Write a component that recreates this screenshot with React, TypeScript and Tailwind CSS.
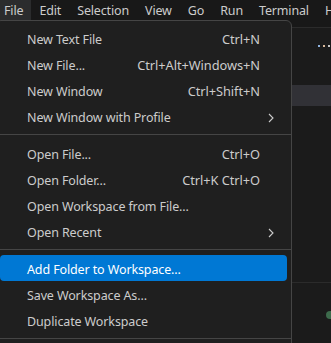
import React from 'react';

type Item = { label: string; shortcut?: string; sub?: boolean; active?: boolean } | 'sep';

const items: Item[] = [
  { label: 'New Text File', shortcut: 'Ctrl+N' },
  { label: 'New File...', shortcut: 'Ctrl+Alt+Windows+N' },
  { label: 'New Window', shortcut: 'Ctrl+Shift+N' },
  { label: 'New Window with Profile', sub: true },
  'sep',
  { label: 'Open File...', shortcut: 'Ctrl+O' },
  { label: 'Open Folder...', shortcut: 'Ctrl+K Ctrl+O' },
  { label: 'Open Workspace from File...' },
  { label: 'Open Recent', sub: true },
  'sep',
  { label: 'Add Folder to Workspace...', active: true },
  { label: 'Save Workspace As...' },
  { label: 'Duplicate Workspace' },
  'sep',
];

const menus = ['File', 'Edit', 'Selection', 'View', 'Go', 'Run', 'Terminal', 'Help'];

const Chevron = () => (
  <svg width="6" height="10" viewBox="0 0 6 10" fill="none">
    <path d="M1 1l4 4-4 4" stroke="#cccccc" strokeWidth="1.1" />
  </svg>
);

export default function App() {
  return (
    <div
      className="w-[331px] h-[343px] overflow-hidden bg-[#181818] text-[#cccccc] text-[13px] flex flex-col"
      style={{ fontFamily: '"Noto Sans", "Open Sans", sans-serif' }}
    >
      {/* Menu bar */}
      <div className="h-[20px] flex items-center -ml-1 shrink-0 whitespace-nowrap">
        {menus.map((m, i) => (
          <div
            key={m}
            className={`h-full flex items-center px-2 pt-[2px] leading-none text-[12.5px] tracking-[-0.15px] ${
              i === 0 ? 'bg-[#2b2c2d]' : ''
            }`}
          >
            {m}
          </div>
        ))}
      </div>

      {/* Workbench behind the menu */}
      <div className="relative flex-1 flex flex-col">
        <div className="h-[8px] border-b border-[#2b2b2b] shrink-0" />
        <div className="h-[57px] bg-[#1b1b1b] flex justify-end items-start pt-[17px] pr-[1px] gap-[3px] shrink-0">
          <span className="w-[2px] h-[2px] bg-[#8fb3e0]" />
          <span className="w-[2px] h-[2px] bg-[#d8b89a]" />
          <span className="w-[2px] h-[2px] bg-[#c8c8c8]" />
        </div>
        <div className="h-[21px] bg-[#313136] shrink-0" />
        <div className="h-[177px] bg-[#1b1b1b] border-b border-[#2b2b2b] shrink-0" />
        <div className="flex-1 bg-[#1b1b1b] flex justify-end pt-[28px]">
          <span className="w-[8px] h-[8px] rounded-full bg-[#3d6b4c] -mr-[3px]" />
        </div>

        {/* File dropdown */}
        <div className="absolute top-0 left-[-5px] w-[297px] bg-[#1f1f1f] border border-[#454545] rounded-md py-1 whitespace-nowrap">
          {items.map((it, i) =>
            it === 'sep' ? (
              <div key={i} className="h-[11px] flex items-center">
                <div className="w-full h-px bg-[#454545]" />
              </div>
            ) : (
              <div
                key={i}
                className={`h-[26px] mx-1 rounded-[4px] flex items-center pl-[27px] pt-[4px] ${
                  it.active ? 'bg-[#0078d4] text-white' : ''
                }`}
              >
                <span className="flex-1 text-[12.5px] tracking-[-0.12px]">{it.label}</span>
                {it.shortcut && <span className="text-[12.8px] tracking-[-0.05px]">{it.shortcut}</span>}
                <span className="w-[27px] pl-[8px] flex items-center">{it.sub && <Chevron />}</span>
              </div>
            )
          )}
        </div>
      </div>
    </div>
  );
}
